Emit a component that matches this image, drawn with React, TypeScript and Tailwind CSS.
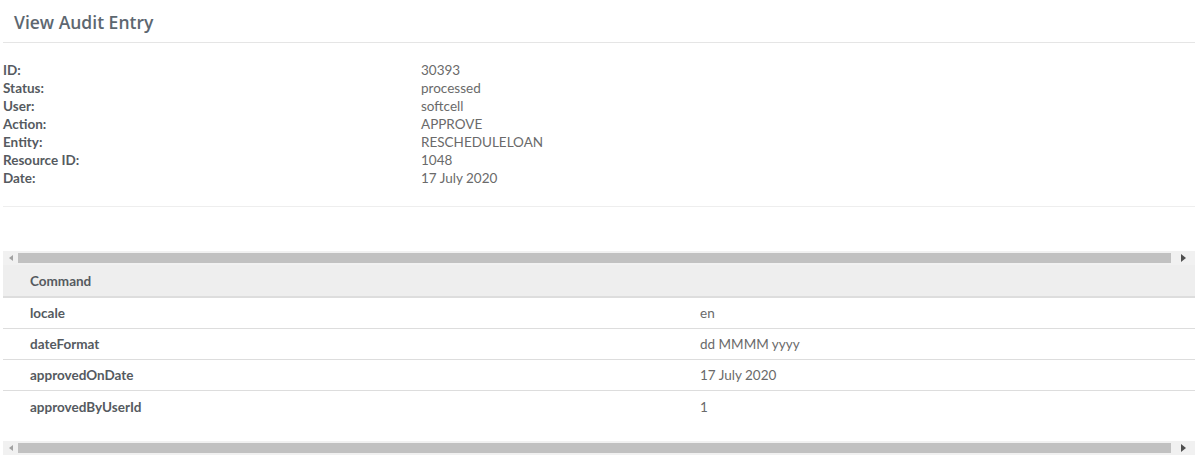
const details: [string, string][] = [
  ["ID:", "30393"],
  ["Status:", "processed"],
  ["User:", "softcell"],
  ["Action:", "APPROVE"],
  ["Entity:", "RESCHEDULELOAN"],
  ["Resource ID:", "1048"],
  ["Date:", "17 July 2020"],
];

const commandRows: [string, string][] = [
  ["locale", "en"],
  ["dateFormat", "dd MMMM yyyy"],
  ["approvedOnDate", "17 July 2020"],
  ["approvedByUserId", "1"],
];

const ScrollBar: React.FC = () => (
  <div className="flex h-[14px] items-center bg-[#f1f1f1]">
    <div className="flex w-[15px] justify-center">
      <span className="h-0 w-0 border-y-[3.5px] border-r-[4px] border-y-transparent border-r-[#a3a3a3]" />
    </div>
    <div className="h-[10px] flex-1 bg-[#c1c1c1]" />
    <div className="flex w-[24px] justify-center">
      <span className="h-0 w-0 border-y-[4px] border-l-[5px] border-y-transparent border-l-[#505050]" />
    </div>
  </div>
);

export default function App() {
  return (
    <div className="min-h-[458px] bg-white pl-[3px] pr-[5px] font-['Lato',sans-serif]">
      <div className="border-b border-[#e5e5e5] pb-[7px] pt-[9px] pl-[11px]">
        <h1 className="font-['Open_Sans',sans-serif] text-[17.5px] font-semibold text-[#5d6770]">
          View Audit Entry
        </h1>
      </div>

      <div className="border-b border-[#eeeeee] pt-[18px] pb-[19px]">
        {details.map(([label, value]) => (
          <div key={label} className="flex h-[18px] items-center text-[13.5px]">
            <span className="w-[418px] font-bold text-[#555a60]">{label}</span>
            <span className="text-[#6a6a6a]">{value}</span>
          </div>
        ))}
      </div>

      <div className="mt-[44px]">
        <ScrollBar />
        <div className="flex h-[33px] items-center border-b-2 border-[#dddddd] bg-[#eeeeee] pl-[27px] text-[13.5px] font-bold text-[#555a60]">
          Command
        </div>
        <div>
          {commandRows.map(([key, value]) => (
            <div
              key={key}
              className="flex h-[31px] items-center border-b border-[#dddddd] text-[13.5px] last:border-b-0"
            >
              <span className="w-[697px] pl-[27px] font-bold text-[#555a60]">{key}</span>
              <span className="text-[#6a6a6a]">{value}</span>
            </div>
          ))}
        </div>
        <div className="h-[19px]" />
        <ScrollBar />
      </div>
    </div>
  );
}
